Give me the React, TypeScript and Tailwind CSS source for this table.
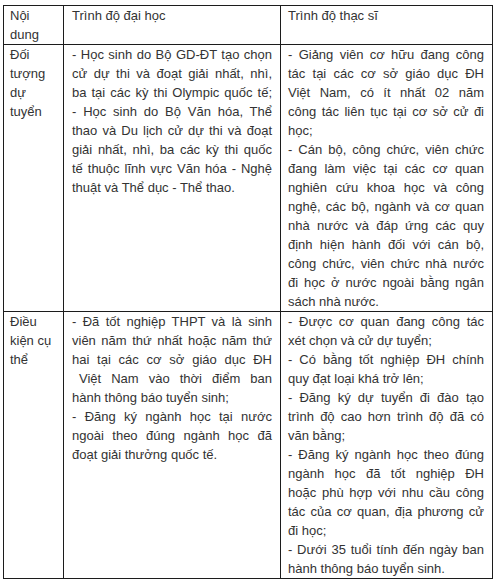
import React from "react";

type L = [string, boolean?];

const Cell = ({ lines, pl }: { lines: L[]; pl: string }) => (
  <div className={`${pl} pr-[8px] border-b border-r border-[#1c1c1c]`}>
    {lines.map(([t, j], i) => (
      <div
        key={i}
        className={`whitespace-nowrap h-[19px] ${j ? "text-justify [text-align-last:justify]" : "text-left"} ${t.startsWith("  ") ? "pl-[7px]" : ""}`}
      >
        {t.trim()}
      </div>
    ))}
  </div>
);

const r2c2: L[] = [
  ["- Học sinh do Bộ GD-ĐT tạo chọn", true],
  ["cử dự thi và đoạt giải nhất, nhì,", true],
  ["ba tại các kỳ thi Olympic quốc tế;", true],
  ["- Học sinh do Bộ Văn hóa, Thể", true],
  ["thao và Du lịch cử dự thi và đoạt", true],
  ["giải nhất, nhì, ba các kỳ thi quốc", true],
  ["tế thuộc lĩnh vực Văn hóa - Nghệ", true],
  ["thuật và Thể dục - Thể thao."],
];

const r2c3: L[] = [
  ["- Giảng viên cơ hữu đang công", true],
  ["tác tại các cơ sở giáo dục ĐH", true],
  ["Việt Nam, có ít nhất 02 năm", true],
  ["công tác liên tục tại cơ sở cử đi", true],
  ["học;"],
  ["- Cán bộ, công chức, viên chức", true],
  ["đang làm việc tại các cơ quan", true],
  ["nghiên cứu khoa học và công", true],
  ["nghệ, các bộ, ngành và cơ quan", true],
  ["nhà nước và đáp ứng các quy", true],
  ["định hiện hành đối với cán bộ,", true],
  ["công chức, viên chức nhà nước", true],
  ["đi học ở nước ngoài bằng ngân", true],
  ["sách nhà nước."],
];

const r3c2: L[] = [
  ["- Đã tốt nghiệp THPT và là sinh", true],
  ["viên năm thứ nhất hoặc năm thứ", true],
  ["hai tại các cơ sở giáo dục ĐH", true],
  ["  Việt Nam vào thời điểm ban", true],
  ["hành thông báo tuyển sinh;"],
  ["- Đăng ký ngành học tại nước", true],
  ["ngoài theo đúng ngành học đã", true],
  ["đoạt giải thưởng quốc tế."],
];

const r3c3: L[] = [
  ["- Được cơ quan đang công tác", true],
  ["xét chọn và cử dự tuyển;"],
  ["- Có bằng tốt nghiệp ĐH chính", true],
  ["quy đạt loại khá trở lên;"],
  ["- Đăng ký dự tuyển đi đào tạo", true],
  ["trình độ cao hơn trình độ đã có", true],
  ["văn bằng;"],
  ["- Đăng ký ngành học theo đúng", true],
  ["ngành học đã tốt nghiệp ĐH", true],
  ["hoặc phù hợp với nhu cầu công", true],
  ["tác của cơ quan, địa phương cử", true],
  ["đi học;"],
  ["- Dưới 35 tuổi tính đến ngày ban", true],
  ["hành thông báo tuyển sinh."],
];

export default function App() {
  return (
    <div className="w-[498px] h-[582px] bg-white overflow-hidden pt-[5px] pl-[3px]">
      <div
        className="grid grid-cols-[60px_217px_212px] border-l border-t border-[#1c1c1c] w-[490px] text-[13px] leading-[19px] text-[#333333]"
        style={{ fontFamily: '"Liberation Sans", Arial, sans-serif' }}
      >
        <Cell pl="pl-[6px]" lines={[["Nội"], ["dung"]]} />
        <Cell pl="pl-[8px]" lines={[["Trình độ đại học"]]} />
        <Cell pl="pl-[7px]" lines={[["Trình độ thạc sĩ"]]} />

        <Cell pl="pl-[6px]" lines={[["Đối"], ["tượng"], ["dự"], ["tuyển"]]} />
        <Cell pl="pl-[8px]" lines={r2c2} />
        <Cell pl="pl-[7px]" lines={r2c3} />

        <Cell pl="pl-[6px]" lines={[["Điều"], ["kiện cụ"], ["thể"]]} />
        <Cell pl="pl-[8px]" lines={r3c2} />
        <Cell pl="pl-[7px]" lines={r3c3} />
      </div>
    </div>
  );
}
